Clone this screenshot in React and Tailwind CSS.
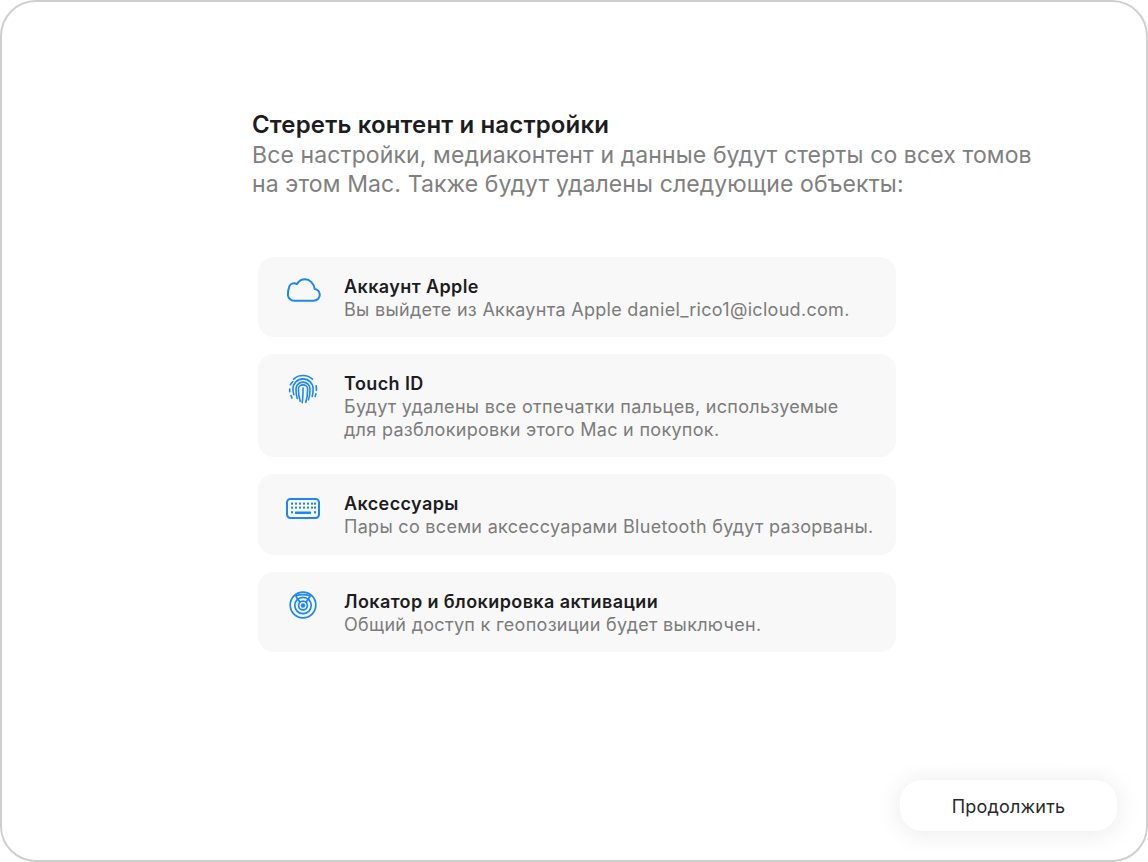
const Cloud = () => (
  <svg width="34" height="24" viewBox="0 0 34 24" fill="none" stroke="#1a86f7" strokeWidth="2" strokeLinejoin="round" className="ml-[2px]">
    <path d="M7.500 22.700h19c3.500 0 6.300-2.600 6.300-5.900 0-3-2.200-5.400-5.100-5.800C26.800 5.500 23 1.300 18 1.300c-3.500 0-6.300 1.900-8 4.800-.9-.5-1.900-.8-2.900-.8-2.800 0-5 2.200-5.200 5.100C.9 11.900.9 14.500.9 16.500c0 3.500 2.900 6.200 6.600 6.200Z" />
  </svg>
);
const Finger = () => (
  <svg width="30" height="30" viewBox="0 0 32 32" fill="none" stroke="#1a86f7" strokeWidth="1.7" strokeLinecap="round">
    <path d="M6 5.500C8.500 3 12 1.600 16 1.600s7.500 1.400 10 3.900" />
    <path d="M2.500 11.500C3.300 10 4.200 8.900 5.200 8M1.800 16v3M3.200 23l1 2.500" />
    <path d="M6.200 22c-.6-2-.9-4-.9-6C5.300 10 10 5.200 16 5.200S26.800 10 26.800 16c0 3-.3 5.500-1 8" />
    <path d="M30 12.500c.3 1.500.4 3 .3 5M29.700 21l-.7 3" />
    <path d="M9.800 26c-.9-3-1.300-6.500-1.300-10 0-4.100 3.400-7.300 7.500-7.300s7.500 3.200 7.500 7.300c0 4-.4 8-1.600 11.500" />
    <path d="M13 29c-1.300-4-1.900-8.500-1.900-13 0-2.700 2.200-4.400 4.900-4.400s4.900 1.700 4.900 4.400c0 5-.6 10-1.900 14.200" />
    <path d="M16 15v3c0 4-.2 8.500-.8 12.600" />
  </svg>
);
const Keyboard = () => (
  <svg width="34" height="21" viewBox="0 0 34 21" fill="none">
    <rect x="1" y="1" width="32" height="19" rx="3.400" stroke="#1a86f7" strokeWidth="2" />
    <g fill="#1a86f7">
      {[5, 9, 13, 17, 21, 25, 28].map((x) => <rect key={"a" + x} x={x} y="4.500" width="2" height="2.200" rx=".4" />)}
      {[5, 9, 13, 17, 21, 25, 28].map((x) => <rect key={"b" + x} x={x} y="8.500" width="2" height="2.200" rx=".4" />)}
      <rect x="5" y="13" width="2" height="2.400" rx=".4" />
      <rect x="9" y="13.500" width="16" height="2.400" rx=".4" />
      <rect x="28" y="13" width="2" height="2.400" rx=".4" />
    </g>
  </svg>
);
const Locator = () => (
  <svg width="28" height="28" viewBox="0 0 28 28" fill="none" stroke="#1a86f7" strokeWidth="1.700">
    <circle cx="14" cy="14" r="12.800" />
    <circle cx="14" cy="14.500" r="8.200" />
    <circle cx="14" cy="14.500" r="4.400" />
    <circle cx="14" cy="14.500" r="2.200" fill="#1a86f7" stroke="none" />
    <path d="M6.500 4.500 11 11.500M21.500 4.500 17 11.500M7 4.800C11.500 3.400 16.500 3.400 21 4.800" />
  </svg>
);

const items = [
  { icon: <Cloud />, box: "pt-[21px]", title: "Аккаунт Apple", lines: ["Вы выйдете из Аккаунта Apple daniel_rico1@icloud.com."], cls: "h-[80px]" },
  { icon: <Finger />, box: "pt-[20px]", title: "Touch ID", lines: ["Будут удалены все отпечатки пальцев, используемые", "для разблокировки этого Mac и покупок."], cls: "h-[103px]" },
  { icon: <Keyboard />, box: "pt-[24px]", title: "Аксессуары", lines: ["Пары со всеми аксессуарами Bluetooth будут разорваны."], cls: "h-[81px]" },
  { icon: <Locator />, box: "pt-[19px]", title: "Локатор и блокировка активации", lines: ["Общий доступ к геопозиции будет выключен."], cls: "h-[80px]" },
];

export default function App() {
  return (
    <div className="w-[1148px] h-[862px] bg-white overflow-hidden font-['Inter','Liberation_Sans',sans-serif]">
      <div className="relative w-full h-full rounded-[36px] border-2 border-[#cfcfcf] bg-white flex flex-col">
        <div className="pl-[250px] pt-[109px] h-[225px]">
          <h1 className="text-[24px] leading-[28px] font-semibold text-[#1d1d1f] tracking-[0.15px]">Стереть контент и настройки</h1>
          <p className="text-[23px] leading-[29px] text-[#808080] mt-[2px] w-[800px] tracking-[0.11px]">
            Все настройки, медиаконтент и данные будут стерты со всех томов
            <br />
            на этом Mac. Также будут удалены следующие объекты:
          </p>
        </div>
        <div className="ml-[256px] mt-[30px] w-[638px] flex flex-col gap-[17px]">
          {items.map((it) => (
            <div key={it.title} className={`${it.cls} rounded-[16px] bg-[#f8f8f8] flex pl-[27px]`}>
              <div className={`w-[36px] mr-[23px] flex justify-center items-start ${it.box}`}>{it.icon}</div>
              <div className="pt-[19px]">
                <div className="text-[18px] leading-[22px] font-semibold text-[#1d1d1f] tracking-[0.4px]">{it.title}</div>
                {it.lines.map((l) => (
                  <div key={l} className="text-[18px] leading-[23px] text-[#7c7c7c] whitespace-nowrap tracking-[0.3px]">{l}</div>
                ))}
              </div>
            </div>
          ))}
        </div>
        <div className="mt-auto flex justify-end pr-[29px] pb-[29px]">
          <button className="w-[217px] h-[51px] rounded-[22px] bg-white text-[18px] leading-[53px] tracking-[0.2px] text-[#2a2a2a] shadow-[0_2px_28px_rgba(0,0,0,0.09)]">Продолжить</button>
        </div>
      </div>
    </div>
  );
}
